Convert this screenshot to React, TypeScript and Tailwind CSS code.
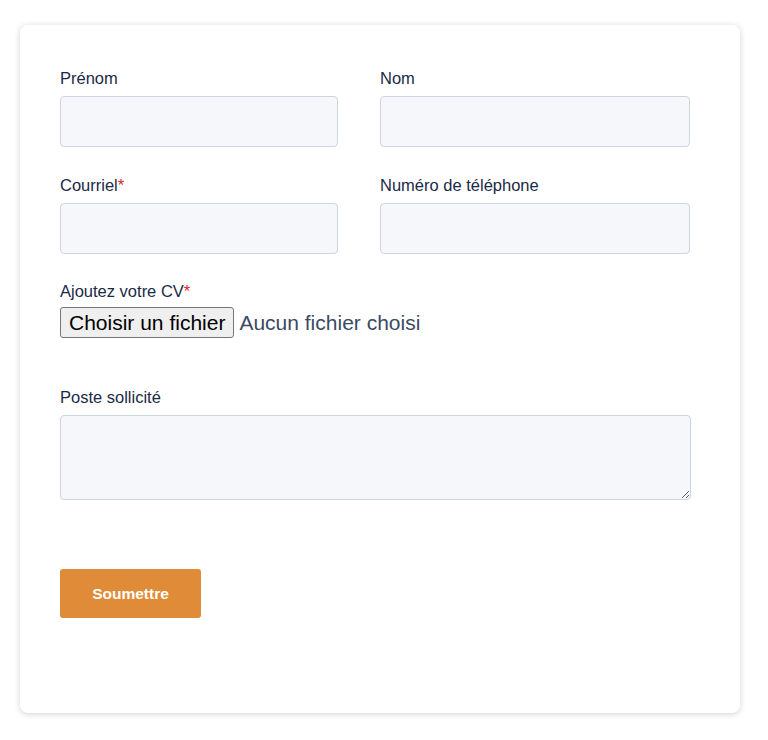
import React from "react";

function Label({ text, required }: { text: string; required?: boolean }) {
  return (
    <label className="block text-[16.5px] leading-[20px] text-[#1b2a47] mb-[8px]">
      {text}
      {required && <span className="text-[#e02424]">*</span>}
    </label>
  );
}

const inputCls =
  "block h-[51px] rounded-[4px] border border-[#cdd5e0] bg-[#f5f7fa] outline-none";

export default function App() {
  return (
    <div className="min-h-[740px] bg-white pt-[25px] pl-[20px] font-['Liberation_Sans',Arial,sans-serif]">
      <div className="w-[720px] h-[688px] rounded-[8px] bg-white shadow-[0_1px_6px_rgba(0,0,0,0.18)] pl-[40px] pt-[43px]">
        <div className="flex gap-[42px]">
          <div>
            <Label text="Prénom" />
            <input className={inputCls + " w-[278px]"} />
          </div>
          <div>
            <Label text="Nom" />
            <input className={inputCls + " w-[310px]"} />
          </div>
        </div>
        <div className="flex gap-[42px] mt-[28px]">
          <div>
            <Label text="Courriel" required />
            <input className={inputCls + " w-[278px]"} />
          </div>
          <div>
            <Label text="Numéro de téléphone" />
            <input className={inputCls + " w-[310px]"} />
          </div>
        </div>
        <div className="mt-[27px]">
          <Label text="Ajoutez votre CV" required />
          <div className="flex items-center -mt-[2px]">
            <button className="h-[31px] px-[8px] rounded-[3px] border border-[#767676] bg-[#efefef] text-[21px] leading-[24px] text-black">
              Choisir un fichier
            </button>
            <span className="ml-[5px] text-[21px] leading-[24px] text-[#3b4a63]">
              Aucun fichier choisi
            </span>
          </div>
        </div>
        <div className="mt-[49px]">
          <Label text="Poste sollicité" />
          <textarea className="block w-[631px] h-[85px] rounded-[4px] border border-[#cdd5e0] bg-[#f5f7fa] outline-none resize" />
        </div>
        <button className="mt-[69px] w-[141px] h-[49px] rounded-[3px] bg-[#df8b37] text-white font-bold text-[15.5px]">
          Soumettre
        </button>
      </div>
    </div>
  );
}
